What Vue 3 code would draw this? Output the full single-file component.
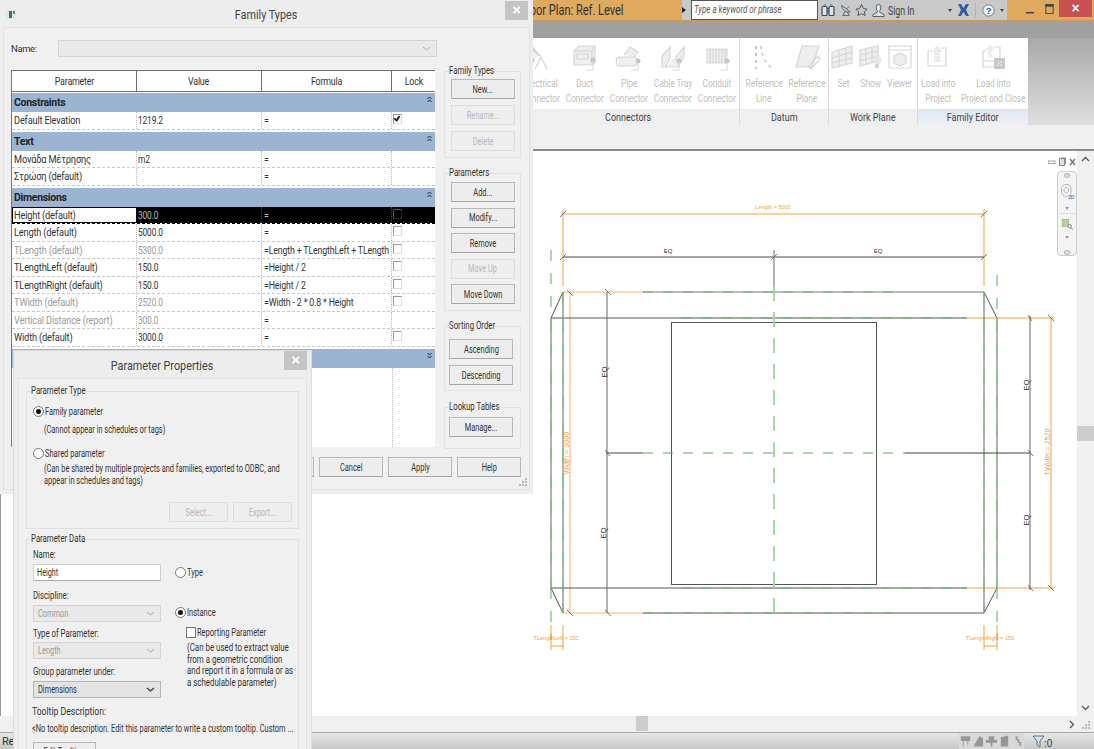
<script setup>
const panels = [
  { name: 'Connectors', cls: 'p-conn', tools: [
    { w: 44, l: ['Electrical', 'Connector'], d: 'M4 3L14 14L7 8ZM14 14L20 26M14 14L8 26M4 12V20', f: 'M1 9L6 2L13 12L8 15Z', pin: [5, 17] },
    { w: 44, l: ['Duct', 'Connector'], d: 'M3 8L8 3H24V19L21 22H3ZM3 8H21V22M21 8L24 3M6 11H17V16H6Z', f: 'M3 8L8 3H24V19L21 22H3Z', pin: [22, 17], tail: 1 },
    { w: 44, l: ['Pipe', 'Connector'], d: 'M3 14H20A3 5 0 0 1 20 23H3A3 5 0 0 1 3 14ZM9 12L15 4L23 9L19 14', f: 'M3 14H20V23H3ZM9 12L15 4L23 9L19 14Z', pin: [23, 18], tail: 1 },
    { w: 44, l: ['Cable Tray', 'Connector'], d: 'M3 24V13L11 4V14L7 24ZM7 24H19L25 13V4L17 14V17', f: 'M3 24V13L11 4V14L7 24ZM17 14L25 4V13L19 24H9L13 16H17Z', pin: [20, 18], tail: 1 },
    { w: 44, l: ['Conduit', 'Connector'], d: 'M4 6H24V20H4ZM7 6V20M10 6V20M13 6V20M16 6V20M19 6V20M22 6V20', f: 'M4 6H24V20H4Z', pin: [24, 18], tail: 1 },
  ] },
  { name: 'Datum', cls: 'p-datum', tools: [
    { w: 44, l: ['Reference', 'Line'], d: '', f: '', dots: 'M6 3V26', dots2: 'M11 3C12 14 16 22 24 26' },
    { w: 42, l: ['Reference', 'Plane'], d: 'M9 3H26L19 24H3ZM18 26L27 16L25 13L16 23Z', f: 'M9 3H26L19 24H3Z' },
  ] },
  { name: 'Work Plane', cls: 'p-wp', tools: [
    { w: 28, l: ['Set'], d: 'M3 9L23 3V20L3 25ZM3 15L23 9M3 20L23 15M10 7V24M17 5V22', f: 'M3 9L23 3V20L3 25Z' },
    { w: 28, l: ['Show'], d: 'M3 7L21 3V18L3 23ZM3 12L21 8M3 18L21 13M9 5V21M15 4V20', f: 'M3 7L21 3V18L3 23Z', bulb: 1 },
    { w: 29, l: ['Viewer'], d: 'M3 3H25V25H3ZM3 7H25M8 13L14 10L20 13V20L14 23L8 20Z', f: 'M8 13L14 10L20 13V20L14 23L8 20Z' },
  ] },
  { name: 'Family Editor', cls: 'p-fam', tools: [
    { w: 40, l: ['Load into', 'Project'], d: 'M8 8H4V23H22V5H17M9 18H17', f: 'M13 2L19 9H16V17H10V9H7Z' },
    { w: 70, l: ['Load into', 'Project and Close'], d: 'M7 8H4V24H16M4 18H15M15 4H21V15', f: 'M11 1L16 7H13V14H9V7H6Z', closeBox: 1 },
  ] },
]

const params = [
  { g: 'Constraints' },
  { n: 'Default Elevation', v: '1219.2', f: '=', check: 'on' },
  { g: 'Text' },
  { n: 'Μονάδα Μέτρησης', v: 'm2', f: '=' },
  { n: 'Στρώση (default)', v: '', f: '=' },
  { g: 'Dimensions' },
  { n: 'Height (default)', v: '300.0', f: '=', check: 'off', sel: true },
  { n: 'Length (default)', v: '5000.0', f: '=', check: 'off' },
  { n: 'TLength (default)', v: '5300.0', f: '=Length + TLengthLeft + TLength', check: 'off', dim: true },
  { n: 'TLengthLeft (default)', v: '150.0', f: '=Height / 2', check: 'off' },
  { n: 'TLengthRight (default)', v: '150.0', f: '=Height / 2', check: 'off' },
  { n: 'TWidth (default)', v: '2520.0', f: '=Width - 2 * 0.8 * Height', check: 'off', dim: true },
  { n: 'Vertical Distance (report)', v: '300.0', f: '=', dim: true },
  { n: 'Width (default)', v: '3000.0', f: '=', check: 'off' },
]

const sideGroups = [
  { title: 'Family Types', cls: 'sg-types', lw: 44, btns: [['New...'], ['Rename...', 1], ['Delete', 1]] },
  { title: 'Parameters', cls: 'sg-params', lw: 38, btns: [['Add...'], ['Modify...'], ['Remove'], ['Move Up', 1], ['Move Down']] },
  { title: 'Sorting Order', cls: 'sg-sort', lw: 45, btns: [['Ascending'], ['Descending']] },
  { title: 'Lookup Tables', cls: 'sg-lookup', lw: 47, btns: [['Manage...']] },
]

const ticks = [
  [560, 217, 566, 211], [981, 217, 987, 211], [560, 260, 566, 254], [981, 260, 987, 254], [771, 260, 777, 254],
  [567, 290, 573, 296], [605, 289, 611, 295], [1028, 315, 1032, 321], [1048, 315, 1054, 321],
  [605, 450, 610, 456], [1028, 450, 1033, 456], [567, 610, 573, 616], [605, 610, 611, 616],
  [1028, 585, 1033, 591], [1048, 585, 1054, 591],
]
const darkV = [
  [551, 318, 588], [563, 292, 613], [984, 292, 613], [997, 318, 588],
  [607, 292, 613], [1030, 316, 590],
]
</script>

<template>
  <div class="app">
    <header class="topbar">
      <div class="doc-title"><span>Floor Plan: Ref. Level</span></div>
      <div class="infocenter">
        <span class="caret-right"></span>
        <div class="search"><span>Type a keyword or phrase</span></div>
        <div class="info-icons">
          <svg width="14" height="14" viewBox="0 0 14 14" class="ic"><path d="M2.500 1H5V3.500H2.500ZM9 1H11.500V3.500H9Z" fill="#8c97a6"/><rect x="1" y="3.500" width="5" height="9" rx="1" fill="#dfe3e8" stroke="#3a4658" stroke-width="1.200"/><rect x="8" y="3.500" width="5" height="9" rx="1" fill="#dfe3e8" stroke="#3a4658" stroke-width="1.200"/><path d="M6 5.500H8M6 8H8" stroke="#3a4658" stroke-width="1.200"/></svg>
          <svg width="12" height="15" viewBox="0 0 13 15" class="ic ic-sat"><path d="M2 2C2 7 6 10 11 9ZM6 8L3 13H10L8 9M7 6L10 3" fill="none" stroke="#55606e"/></svg>
          <svg width="13" height="14" viewBox="0 0 14 14" class="ic ic-star"><path d="M7 1L9 5.5L13 6L10 9L11 13L7 11L3 13L4 9L1 6L5 5.5Z" fill="none" stroke="#45505e"/></svg>
          <svg width="13" height="15" viewBox="0 0 14 15" class="ic ic-user"><path d="M4.5 4A2.5 3 0 0 1 9.500 4C9.500 7 8 8 8 9L13 12V14H1V12L6 9C6 8 4.500 7 4.500 4Z" fill="#dde3ea" stroke="#4d5866"/></svg>
          <span class="signin"><span>Sign In</span></span>
          <span class="caret-down c1"></span>
          <svg width="13" height="14" viewBox="0 0 13 14" class="ic ic-x"><path d="M1 1H4L6.500 5L9 1H12L9 7L12 13H9L6.500 9L4 13H1L4 7Z" fill="#2f5f9d"/></svg>
          <span class="sep"></span>
          <svg width="13" height="15" viewBox="0 0 15 15" class="ic ic-help"><circle cx="7.500" cy="7.500" r="6.500" fill="#f2f5f9" stroke="#5a6f8c"/><text x="7.500" y="11" text-anchor="middle" class="qm">?</text></svg>
          <span class="caret-down c2"></span>
        </div>
      </div>
      <div class="winctl">
        <svg width="8" height="3" viewBox="0 0 8 3" class="w-min"><rect width="8" height="1.500" fill="#444"/></svg>
        <svg width="9" height="10" viewBox="0 0 9 11" class="w-max"><rect x=".5" y=".5" width="8" height="10" fill="none" stroke="#444"/><rect width="9" height="3" fill="#444"/></svg>
        <div class="w-close">×</div>
      </div>
    </header>
    <div class="band"></div>

    <section class="ribbon">
      <div v-for="p in panels" :key="p.name" class="panel" :class="p.cls">
        <div class="tools">
          <div v-for="t in p.tools" :key="t.l.join()" class="tool" :style="{ width: t.w + 'px' }">
            <svg width="28" height="28" viewBox="0 0 28 28" class="tool-ic">
              <path v-if="t.f" :d="t.f" fill="#eeeeee" stroke="none"/>
              <path v-if="t.d" :d="t.d" fill="none" stroke="#d6d6d6" stroke-width="1.200"/>
              <path v-if="t.dots" :d="t.dots" fill="none" stroke="#c4c4c4" stroke-width="2" stroke-dasharray="3 4"/>
              <path v-if="t.dots2" :d="t.dots2" fill="none" stroke="#c4c4c4" stroke-width="1.500" stroke-dasharray="3 4"/>
              <g v-if="t.pin"><circle :cx="t.pin[0]" :cy="t.pin[1]" r="2.500" fill="#c4c4c4"/></g>
              <path v-if="t.tail" :d="`M${t.pin[0]} ${t.pin[1]}V27H${t.pin[0] - 7}`" fill="none" stroke="#d6d6d6"/>
              <g v-if="t.bulb"><circle cx="20" cy="17" r="4.500" fill="#e6e6e6"/><rect x="18" y="21" width="4" height="4" fill="#d6d6d6"/></g>
              <g v-if="t.closeBox"><rect x="15" y="15" width="11" height="11" fill="#c8c8c8"/><path d="M18 18L23 23M23 18L18 23" stroke="#eee"/></g>
            </svg>
            <div v-for="line in t.l" :key="line" class="tool-line">{{ line }}</div>
          </div>
        </div>
        <div class="panel-name"><span>{{ p.name }}</span></div>
      </div>
      <div class="ribbon-rest"></div>
    </section>
    <div class="tabstrip"></div>

    <main class="workspace">
      <div class="canvas">
        <svg class="drawing" width="1077" height="565" viewBox="0 151 1077 565">
          <g fill="none">
            <path d="M563 209V286M984 209V286M563 214H984" stroke="#f5a03c"/>
            <path d="M563 257H984" stroke="#4a4a4a"/>
            <path d="M774 250V286" stroke="#999" stroke-width="1.500"/>
            <path d="M570 293V613" stroke="#fcc898" stroke-width="1.500"/>
            <path d="M1051 318V588" stroke="#f5a03c"/>
            <path d="M563 292L551 318M984 292L997 318M551 588L563 613M997 588L984 613" stroke="#555"/>
            <path d="M643 292H984" stroke="#777"/>
            <path d="M551 318H967M551 588H967M643 613H984" stroke="#555"/>
            <path d="M967 318H1054M967 588H1055" stroke="#f5a03c"/>
            <path d="M563 292H643M563 613H643" stroke="#fcb26e"/>
            <path v-for="v in darkV" :key="v[0]" :d="`M${v[0]} ${v[1]}V${v[2]}`" stroke="#666"/>
            <rect x="671.500" y="322.500" width="205" height="262" stroke="#555"/>
            <path d="M643 292H902M682 318H967M682 588H967M643 613H902" stroke="#62b862" stroke-dasharray="10 10"/>
            <path d="M551 250V318M551 588V640M997 275V318M997 588V640" stroke="#55b055" stroke-dasharray="11 12"/>
            <path d="M551 318V588M563 292V613M984 292V613M997 318V588" stroke="#6cc46c" stroke-dasharray="14 12"/>
            <path d="M774 286V612" stroke="#a5d8a5" stroke-width="2" stroke-dasharray="15 11"/>
            <path d="M606 453H643M905 453H1031" stroke="#444"/>
            <path d="M643 453H905" stroke="#55a855" stroke-dasharray="10 10"/>
            <path d="M551 625V650M563 625V650M551 646H563M984 625V650M997 625V650M984 646H997" stroke="#f5a03c"/>
            <path v-for="(t, i) in ticks" :key="i" :d="`M${t[0]} ${t[1]}L${t[2]} ${t[3]}`" stroke="#555" stroke-width=".8"/>
          </g>
          <g class="dim orange">
            <text x="773" y="209" text-anchor="middle">Length = 5000</text>
            <text x="556" y="640" text-anchor="middle">TLengthLeft = 150</text>
            <text x="990" y="640" text-anchor="middle">TLengthRight = 150</text>
            <text class="rot" transform="translate(568.500 453) rotate(-90)" text-anchor="middle">Width = 3000</text>
            <text class="rot" transform="translate(1049.500 452) rotate(-90)" text-anchor="middle">TWidth = 2520</text>
          </g>
          <g class="dim">
            <text class="eq" x="668" y="253" text-anchor="middle">EQ</text>
            <text class="eq" x="878" y="253" text-anchor="middle">EQ</text>
            <text class="eqv" transform="translate(606.500 372) rotate(-90)" text-anchor="middle">EQ</text>
            <text class="eqv" transform="translate(606 533) rotate(-90)" text-anchor="middle">EQ</text>
            <text class="eqv" transform="translate(1029 385) rotate(-90)" text-anchor="middle">EQ</text>
            <text class="eqv" transform="translate(1029 520) rotate(-90)" text-anchor="middle">EQ</text>
          </g>
        </svg>
        <div class="view-ctl">
          <svg width="8" height="4" viewBox="0 0 8 4"><rect y="1" width="7" height="2.500" fill="#fff" stroke="#777" stroke-width=".7"/></svg>
          <svg width="7" height="9" viewBox="0 0 7 9"><rect x=".5" y="1.500" width="5" height="7" fill="#ddd" stroke="#777" stroke-width=".8"/><path d="M2 1H6.500V7" fill="none" stroke="#777" stroke-width=".8"/></svg>
          <svg width="7" height="8" viewBox="0 0 7 8"><path d="M1 1L6 7M6 1L1 7" stroke="#777" stroke-width="1.500"/></svg>
        </div>
        <div class="navbar">
          <span class="nav-dot"></span>
          <svg width="16" height="19" viewBox="0 0 16 19" class="nav-wheel"><rect x=".5" y=".5" width="11" height="14" rx="5" fill="#fafafa" stroke="#aaa"/><circle cx="6" cy="7" r="3" fill="none" stroke="#aaa"/><text x="15.500" y="17" text-anchor="end" class="d2">2D</text></svg>
          <span class="nav-caret"></span>
          <span class="nav-sep"></span>
          <svg width="13" height="13" viewBox="0 0 13 13" class="nav-zoom"><rect x=".5" y=".5" width="7" height="8" fill="#b7d39a" stroke="#9ab38a"/><circle cx="9" cy="8.500" r="2" fill="#fff" stroke="#666"/><path d="M10.500 10L12.500 12.500" stroke="#666"/></svg>
          <span class="nav-caret second"></span>
          <span class="nav-dot bottom"></span>
        </div>
      </div>
      <aside class="vscroll">
        <svg width="9" height="6" viewBox="0 0 9 6" class="chev"><path d="M1 5L4.500 1.500L8 5" fill="none" stroke="#555" stroke-width="1.300"/></svg>
        <div class="v-thumb"></div>
        <svg width="9" height="6" viewBox="0 0 9 6" class="chev chev-dn"><path d="M1 1L4.500 4.500L8 1" fill="none" stroke="#555" stroke-width="1.300"/></svg>
      </aside>
    </main>

    <div class="hscroll">
      <div class="h-thumb"></div>
      <svg width="6" height="9" viewBox="0 0 6 9" class="chev-r"><path d="M1 1L4.500 4.500L1 8" fill="none" stroke="#555" stroke-width="1.300"/></svg>
      <svg width="8" height="8" viewBox="0 0 8 8" class="grip"><path d="M6 0h2v2H6zM3 3h2v2H3zM6 3h2v2H6zM0 6h2v2H0zM3 6h2v2H3zM6 6h2v2H6z" fill="#bbb"/></svg>
    </div>
    <footer class="status">
      <span class="ready">Ready</span>
      <div class="status-icons">
        <svg v-for="d in ['M2 2H7V7H5V13H4V7H2ZM7 2H12V7H10V11H9V7H7Z', 'M2 12L8 2L12 4V13H2Z', 'M4 2H10V6H13V9H8V13H6V9H1V6H4Z', 'M3 3L11 1V13H3Z', 'M5 2H7V5H9V8H11V12H9V9H7V6H5Z']" :key="d" width="13" height="16" viewBox="0 0 14 14" class="st-ic"><path :d="d" fill="#969696"/></svg>
        <svg width="13" height="14" viewBox="0 0 13 14" class="st-filter"><path d="M1 2H12L8 7V13L5 11V7Z" fill="#d9e6ee" stroke="#5d7182"/></svg>
        <span class="filter-n">:0</span>
      </div>
    </footer>

    <!-- Family Types dialog -->
    <div class="dialog family">
      <div class="d-head">
        <svg width="10" height="9" viewBox="0 0 10 9" class="d-icon"><rect width="10" height="9" fill="#dfe6ea"/><rect x="3" y="1" width="3" height="7" fill="#2d7a5f"/><rect x="7" y="1" width="2" height="3" fill="#6a7c88"/></svg>
        <div class="d-title">Family Types</div>
        <div class="d-close">×</div>
      </div>
      <div class="d-body">
        <div class="name-row">
          <label class="lbl name-lbl">Name:</label>
          <div class="select disabled name-sel">
            <svg width="9" height="5" viewBox="0 0 9 5"><path d="M1 1L4.500 4L8 1" fill="none" stroke="#aaa"/></svg>
          </div>
        </div>
        <div class="main-row">
          <div class="ptable">
            <div class="thead">
              <div class="th"><span>Parameter</span></div>
              <div class="th"><span>Value</span></div>
              <div class="th"><span>Formula</span></div>
              <div class="th"><span>Lock</span></div>
            </div>
            <template v-for="r in params" :key="r.g || r.n">
              <div v-if="r.g" class="group-row">
                <span>{{ r.g }}</span>
                <svg width="5" height="7" viewBox="0 0 5 7" class="fold"><path d="M.5 3L2.500 1L4.500 3M.5 6L2.500 4L4.500 6" fill="none" stroke="#222"/></svg>
              </div>
              <div v-else class="row" :class="{ sel: r.sel, dim: r.dim }">
                <div class="td"><span>{{ r.n }}</span></div>
                <div class="td val"><span>{{ r.v }}</span></div>
                <div class="td frm"><span>{{ r.f }}</span></div>
                <div class="td lock">
                  <span v-if="r.check" class="chk" :class="{ on: r.check === 'on' }"></span>
                </div>
              </div>
            </template>
            <div class="group-row last">
              <span></span>
              <svg width="5" height="7" viewBox="0 0 5 7" class="fold"><path d="M.5 1L2.500 3L4.500 1M.5 4L2.500 6L4.500 4" fill="none" stroke="#222"/></svg>
            </div>
            <div class="t-rest"><i></i></div>
          </div>
          <div class="side">
            <fieldset v-for="g in sideGroups" :key="g.title" class="sg" :class="g.cls">
              <legend :style="{ width: g.lw + 'px' }"><span>{{ g.title }}</span></legend>
              <button v-for="b in g.btns" :key="b[0]" class="btn" :class="{ off: b[1] }"><span>{{ b[0] }}</span></button>
            </fieldset>
          </div>
        </div>
        <div class="d-foot">
          <button class="btn" aria-label="OK"></button>
          <button class="btn"><span>Cancel</span></button>
          <button class="btn"><span>Apply</span></button>
          <button class="btn"><span>Help</span></button>
        </div>
        <svg width="8" height="8" viewBox="0 0 8 8" class="d-grip"><path d="M6 0h2v2H6zM3 3h2v2H3zM6 3h2v2H6zM0 6h2v2H0zM3 6h2v2H3zM6 6h2v2H6z" fill="#bbb"/></svg>
      </div>
    </div>

    <!-- Parameter Properties dialog -->
    <div class="dialog props">
      <div class="d-head">
        <div class="d-title">Parameter Properties</div>
        <div class="d-close">×</div>
      </div>
      <div class="d-body">
        <fieldset class="pg pg-type">
          <legend class="lg-type"><span>Parameter Type</span></legend>
          <div class="opt"><span class="radio on"></span><span class="opt-t">Family parameter</span></div>
          <div class="note first">(Cannot appear in schedules or tags)</div>
          <div class="opt shared"><span class="radio"></span><span class="opt-t">Shared parameter</span></div>
          <div class="note second">(Can be shared by multiple projects and families, exported to ODBC, and<br>appear in schedules and tags)</div>
          <div class="pg-btns">
            <button class="btn off"><span>Select...</span></button>
            <button class="btn off"><span>Export...</span></button>
          </div>
        </fieldset>
        <fieldset class="pg pg-data">
          <legend class="lg-data"><span>Parameter Data</span></legend>
          <div class="data-cols">
            <div class="data-left">
              <div class="lbl l-name">Name:</div>
              <div class="input"><span>Height</span></div>
              <div class="lbl l-disc">Discipline:</div>
              <div class="select disabled"><span>Common</span><svg width="9" height="5" viewBox="0 0 9 5"><path d="M1 1L4.500 4L8 1" fill="none" stroke="#aaa"/></svg></div>
              <div class="lbl l-top">Type of Parameter:</div>
              <div class="select disabled s-top"><span>Length</span><svg width="9" height="5" viewBox="0 0 9 5"><path d="M1 1L4.500 4L8 1" fill="none" stroke="#aaa"/></svg></div>
              <div class="lbl l-grp">Group parameter under:</div>
              <div class="select active"><span>Dimensions</span><svg width="9" height="5" viewBox="0 0 9 5"><path d="M1 1L4.500 4L8 1" fill="none" stroke="#333" stroke-width="1.200"/></svg></div>
            </div>
            <div class="data-right">
              <div class="opt o-type"><span class="radio"></span><span class="opt-t">Type</span></div>
              <div class="opt o-inst"><span class="radio on"></span><span class="opt-t">Instance</span></div>
              <div class="rep"><span class="box"></span><span class="opt-t">Reporting Parameter</span></div>
              <div class="rep-note">(Can be used to extract value<br>from a geometric condition<br>and report it in a formula or as<br>a schedulable parameter)</div>
            </div>
          </div>
          <div class="lbl l-tip">Tooltip Description:</div>
          <div class="tip">&lt;No tooltip description. Edit this parameter to write a custom tooltip. Custom ...</div>
          <button class="btn edit"><span>Edit Tooltip...</span></button>
        </fieldset>
      </div>
    </div>
  </div>
</template>

<style>
html, body { margin: 0; padding: 0; overflow: hidden; background: #fff; }
</style>

<style scoped>
.app {
  position: relative; width: 1094px; height: 749px; overflow: hidden;
  display: flex; flex-direction: column;
  font-family: Roboto, "Noto Sans", sans-serif; font-size: 10.5px; letter-spacing: -.2px; color: #333;
}
/* narrow text, as in the reference */
.doc-title span, .search span, .signin span, .panel-name span, .th span, .td span:not(.chk),
.btn span, legend span, .opt-t, .input span, .select span {
  display: inline-block; white-space: nowrap; transform-origin: left center;
}
/* top */
.topbar { height: 21px; flex: none; background: #dfa95f; display: flex; box-sizing: border-box; border-bottom: 1px solid #c99a58; }
.doc-title { margin-left: 521px; width: 161px; font-size: 14.500px; line-height: 21px; letter-spacing: 0; color: #333; white-space: nowrap; overflow: hidden; }
.doc-title span { transform: scaleX(.76); }
.infocenter { width: 325px; background: #c9c9c9; display: flex; align-items: center; position: relative; flex: none; }
.caret-right { width: 0; height: 0; border-left: 4px solid #222; border-top: 3px solid transparent; border-bottom: 3px solid transparent; margin: 0 5px 0 0; flex: none; }
.search { width: 127px; height: 20px; flex: none; box-sizing: border-box; background: #fff; border: 1px solid #555; font-style: italic; font-size: 10.5px; line-height: 18px; color: #555; padding-left: 2px; letter-spacing: 0; overflow: hidden; }
.search span { transform: scaleX(.76); }
.info-icons { display: flex; align-items: center; height: 20px; color: #444; }
.ic { margin-left: 3px; flex: none; }
.ic-sat { margin-left: 5px; } .ic-star { margin-left: 3px; } .ic-user { margin-left: 4px; }
.signin { font-size: 12.500px; margin-left: 3px; color: #444; letter-spacing: 0; width: 60px; flex: none; }
.signin span { transform: scaleX(.7); }
.caret-down { width: 0; height: 0; flex: none; border-top: 3px solid #444; border-left: 2.500px solid transparent; border-right: 2.500px solid transparent; }
.ic-x { margin-left: 5px; }
.sep { width: 1px; height: 15px; background: #b5b5b5; margin: 0 6px 0 5px; flex: none; }
.ic-help { margin-left: 0; }
.qm { font: bold 11px "Liberation Sans", sans-serif; fill: #2a59a0; }
.c2 { margin-left: 5px; }
.winctl { flex: 1; display: flex; align-items: flex-start; position: relative; }
.w-min { margin: 12px 0 0 19px; flex: none; }
.w-max { margin: 4px 0 0 11px; flex: none; }
.w-close { width: 33px; height: 17px; background: #c75050; color: #fff; font: bold 14px/16px "Liberation Sans", sans-serif; text-align: center; margin-left: 5px; flex: none; }
.band { height: 17px; flex: none; background: #a0a0a0; }
/* ribbon */
.ribbon { height: 87px; flex: none; display: flex; background: #fff; }
.panel { display: flex; flex-direction: column; border-right: 1px solid #d8d8d8; box-sizing: border-box; height: 87px; flex: none; }
.p-conn { width: 740px; }
.p-datum { width: 89px; }
.p-wp { width: 89px; }
.p-fam { width: 110px; border-right: 0; }
.tools { flex: 1; display: flex; justify-content: flex-end; padding-top: 5px; }
.p-wp .tools { justify-content: flex-start; }
.p-fam .tools { justify-content: flex-start; }
.tool { display: flex; flex-direction: column; align-items: center; color: #c0c0c0; font-size: 10.5px; letter-spacing: -.1px; flex: none; }
.tool-ic { margin-bottom: 5px; flex: none; }
.tool-line { line-height: 15px; white-space: nowrap; transform: scaleX(.8); }
.panel-name { height: 16px; line-height: 17px; text-align: center; background: #efefef; color: #444; font-size: 11px; letter-spacing: 0; }
.panel-name span { transform: scaleX(.82); transform-origin: center; }
.p-conn .panel-name { padding-left: 517px; }
.p-fam .panel-name { background: linear-gradient(#dfe6f2, #eef0f6); }
.ribbon-rest { flex: 1; background: linear-gradient(#a9a9a9, #dedede); }
.tabstrip { height: 26px; flex: none; background: #f0f0f0; border-bottom: 2px solid #8a8a8a; box-sizing: border-box; }
/* workspace */
.workspace { height: 565px; flex: none; display: flex; }
.canvas { position: relative; width: 1077px; background: #fff; border-left: 1px solid #999; box-sizing: border-box; overflow: hidden; }
.drawing { display: block; margin-left: -1px; }
.dim text { font: 5.500px "Liberation Sans", sans-serif; fill: #333; letter-spacing: 0; }
.dim text.rot { font-size: 7.200px; }
.dim text.eq { font-size: 6px; }
.dim text.eqv { font-size: 8px; }
.dim.orange text { fill: #f5a03c; }
.view-ctl { position: absolute; left: 1047px; top: 6px; display: flex; gap: 3px; align-items: center; }
.navbar { position: absolute; left: 1056px; top: 20px; width: 20px; height: 85px; box-sizing: border-box; background: #f4f4f4; border: 1px solid #ccc; border-radius: 4px; display: flex; flex-direction: column; align-items: center; }
.nav-dot { width: 4px; height: 4px; border-radius: 50%; background: #ddd; border: 1px solid #bbb; margin-top: 1px; }
.nav-dot.bottom { margin-top: 11px; }
.nav-wheel { margin-top: 6px; margin-left: 2px; }
.nav-caret { width: 0; height: 0; border-top: 3px solid #999; border-left: 2px solid transparent; border-right: 2px solid transparent; margin-top: 6px; }
.nav-caret.second { margin-top: 6px; }
.nav-sep { width: 16px; height: 1px; background: #ddd; margin-top: 3px; }
.nav-zoom { margin-top: 5px; }
.d2 { font: bold 6px "Liberation Sans", sans-serif; fill: #5b8bd0; }
.vscroll { width: 17px; background: #f0f0f0; position: relative; }
.chev { position: absolute; left: 4px; top: 5px; }
.chev-dn { top: auto; bottom: 5px; }
.v-thumb { position: absolute; left: 0; right: 0; top: 275px; height: 15px; background: #cdcdcd; }
.hscroll { height: 16px; flex: none; background: #f0f0f0; position: relative; }
.h-thumb { position: absolute; left: 636px; top: 0; width: 12px; height: 15px; background: #cdcdcd; }
.chev-r { position: absolute; left: 1069px; top: 4px; }
.grip { position: absolute; right: 4px; top: 5px; }
.status { flex: 1; background: linear-gradient(#e6e6e6, #c8c8c8); border-top: 1px solid #a8a8a8; display: flex; justify-content: space-between; align-items: center; font-size: 11px; padding-left: 2px; }
.status-icons { display: flex; align-items: center; margin-right: 42px; }
.st-ic { background: #d8d8d8; }
.st-filter { margin-left: 8px; }
.filter-n { font: 10px "Liberation Sans", sans-serif; color: #333; margin-left: -1px; margin-top: 4px; }
/* dialogs */
.dialog { position: absolute; background: #ededed; box-sizing: border-box; display: flex; flex-direction: column; }
.family { left: 0; top: 0; width: 533px; height: 494px; }
.props { left: 14px; top: 351px; width: 297px; height: 420px; box-shadow: 0 0 0 1px #dcdcdc; }
.d-head { height: 27px; flex: none; position: relative; display: flex; justify-content: center; }
.d-icon { position: absolute; left: 6px; top: 10px; }
.d-title { font-size: 13.500px; line-height: 28px; color: #444; letter-spacing: 0; transform: scaleX(.8); white-space: nowrap; }
.d-close { position: absolute; right: 5px; top: 1px; width: 23px; height: 19px; background: #c4c4c4; color: #fff; font: bold 15px/18px "Liberation Sans", sans-serif; text-align: center; }
.props .d-close { right: 4px; top: 0; }
.d-body { flex: 1; margin: 0 3px 4px; background: #f0f0f0; border: 1px solid #e2e2e2; box-sizing: border-box; position: relative; }
.family .d-body { padding: 11px 8px 0 7px; }
.name-row { display: flex; height: 18px; align-items: center; }
.lbl { font-size: 10px; color: #333; letter-spacing: 0; white-space: nowrap; transform: scaleX(.78); transform-origin: left center; }
.name-lbl { width: 47px; flex: none; display: block; transform: none; font-size: 9.500px; letter-spacing: -.4px; }
.select { height: 17px; box-sizing: border-box; border: 1px solid #d4d4d4; background: #e9e9e9; display: flex; align-items: center; justify-content: space-between; padding: 0 5px 0 4px; font-size: 10px; letter-spacing: 0; color: #999; }
.select span { transform: scaleX(.74); }
.name-sel { width: 379px; justify-content: flex-end; }
.main-row { display: flex; gap: 9px; margin-top: 8px; height: 384px; }
.ptable { width: 424px; height: 377px; margin-top: 5px; background: #fff; display: flex; flex-direction: column; border-left: 1px solid #777; box-sizing: border-box; flex: none; }
.thead { display: grid; grid-template-columns: 125px 125px 130px 43px; height: 22px; flex: none; background: #fff; border: solid #6f6f6f; border-width: 1px 0; box-sizing: border-box; margin-bottom: 1px; }
.th { text-align: center; line-height: 21px; font-size: 10.500px; border-right: 1px solid #6f6f6f; color: #333; }
.th span { transform: scaleX(.84); transform-origin: center; }
.th:last-child { border-right: 0; }
.group-row { height: 19px; flex: none; background: #9ab4d2; margin-top: 2px; display: flex; justify-content: space-between; padding: 0 3px 0 2px; font-weight: 700; font-size: 10.500px; line-height: 20px; color: #222; letter-spacing: -.3px; }
.thead + .group-row { margin-top: 0; }
.fold { margin-top: 3px; }
.row { display: grid; grid-template-columns: 125px 125px 130px 43px; height: 17.500px; flex: none; border-bottom: 1px dashed #c8c8c8; box-sizing: border-box; }
.td { padding-left: 2px; line-height: 17px; font-size: 10.500px; border-right: 1px dotted #b8b8b8; white-space: nowrap; overflow: hidden; color: #333; }
.td span:not(.chk) { transform: scaleX(.88); }
.td.val { padding-left: 1px; }
.td.val span { transform: scaleX(.8); }
.td.frm span { transform: scaleX(.84); }
.td:last-child { border-right: 0; }
.frm { color: #333; }
.row.dim .td { color: #9a9a9a; }
.row.dim .frm { color: #333; }
.row.sel { border-bottom-color: #000; }
.row.sel .td { background: #000; color: #bbb; border-right-color: #444; }
.row.sel .td:first-child { background: #fff; color: #333; outline: 1px solid #000; outline-offset: -1px; }
.lock { padding-left: 1px; }
.chk { display: inline-block; width: 7px; height: 8px; border: 1px solid #999; border-right-color: #ddd; border-bottom-color: #ddd; background: #fff; margin-top: 2px; vertical-align: top; position: relative; }
.row.sel .chk { background: #000; border-color: #555 #222 #222 #555; }
.chk.on::after { content: ""; position: absolute; left: 1px; top: 0; width: 2px; height: 4px; border: solid #222; border-width: 0 2px 2px 0; transform: rotate(35deg); }
.t-rest { flex: 1; position: relative; }
.t-rest i { position: absolute; left: 380px; top: 0; bottom: 0; border-left: 1px dotted #b8b8b8; }
.side { width: 77px; flex: none; display: flex; flex-direction: column; }
.sg { margin: 0; border: 1px solid #e2e2e2; padding: 2px 5px 6px 6px; box-sizing: border-box; display: flex; flex-direction: column; min-width: 0; }
.sg legend { font-size: 10px; padding: 0; margin-left: -2px; line-height: 12px; color: #333; letter-spacing: 0; white-space: nowrap; }
legend span { transform: scaleX(.78); }
.sg-types { height: 93px; gap: 6px; }
.sg-params { height: 144px; margin-top: 9px; gap: 5.500px; padding-top: 3px; }
.sg-sort { height: 71px; margin-top: 9px; gap: 6px; padding-top: 7px; padding-left: 4px; }
.sg-lookup { height: 48px; margin-top: 10px; padding-top: 4px; padding-left: 4px; }
.sg-sort legend, .sg-lookup legend { margin-left: 0; }
.btn { width: 64px; height: 20px; flex: none; padding: 0; box-sizing: border-box; background: #ededed; border: 1px solid #b9b9b9; border-bottom-color: #a5a5a5; font: inherit; font-size: 10px; color: #333; letter-spacing: 0; }
.btn span { transform: scaleX(.74); transform-origin: center; }
.btn.off { color: #b8b8b8; border-color: #dcdcdc; background: #eeeeee; }
.d-foot { display: flex; justify-content: flex-end; gap: 5px; margin-top: 8px; }
.d-grip { position: absolute; right: 2px; bottom: 3px; }
/* props */
.props .d-body { padding: 6px 7px 0; margin: 0 4px; }
.pg { margin: 0; border: 1px solid #dfdfdf; padding: 0 6px; box-sizing: border-box; min-width: 0; font-size: 10px; letter-spacing: 0; }
.pg legend { padding: 0; line-height: 12px; font-size: 10px; margin-left: -2px; letter-spacing: 0; color: #333; white-space: nowrap; }
.lg-type { width: 52px; }
.lg-data { width: 53px; }
.pg-type { height: 144px; }
.opt { display: flex; align-items: center; gap: 1px; height: 14px; font-size: 10px; }
.opt-t { transform: scaleX(.75); }
.pg-type .opt:first-of-type { margin-top: 7px; }
.radio { width: 11px; height: 11px; border: 1px solid #777; border-radius: 50%; box-sizing: border-box; background: #fff; position: relative; flex: none; }
.radio.on::after { content: ""; position: absolute; left: 2px; top: 2px; width: 5px; height: 5px; border-radius: 50%; background: #111; }
.note { margin-left: 11px; font-size: 10px; line-height: 11.500px; white-space: nowrap; width: fit-content; transform: scaleX(.74); transform-origin: left center; }
.note.first { margin-top: 5px; line-height: 14px; }
.opt.shared { margin-top: 9px; }
.note.second { margin-top: 3px; }
.pg-btns { display: flex; justify-content: flex-end; gap: 5px; margin-top: 16px; }
.pg-btns .btn { width: 59px; }
.pg-data { margin-top: 4px; height: 240px; }
.data-cols { display: flex; gap: 14px; }
.data-left { width: 128px; flex: none; }
.input { height: 17px; box-sizing: border-box; background: #fff; border: 1px solid #cfcfcf; border-bottom-color: #aaa; padding-left: 3px; line-height: 15px; font-size: 10px; margin-top: 3px; }
.input span { transform: scaleX(.72); }
.l-name { margin-top: 4px; line-height: 12px; }
.l-disc { margin-top: 9px; line-height: 12px; }
.data-left .select { margin-top: 3px; }
.l-top { margin-top: 6px; line-height: 12px; }
.data-left .s-top { margin-top: 2px; }
.l-grp { margin-top: 7px; line-height: 12px; }
.select.active { background: #e3e3e3; border-color: #b5b5b5; color: #333; }
.o-type { margin-top: 20px; }
.o-inst { margin-top: 26px; }
.rep { display: flex; align-items: center; margin: 7px 0 0 11px; gap: 1px; height: 13px; font-size: 10px; white-space: nowrap; }
.box { width: 10px; height: 11px; background: #fff; border: 1px solid #777; box-sizing: border-box; flex: none; }
.rep-note { margin: 3px 0 0 12px; line-height: 11.700px; font-size: 10px; white-space: nowrap; width: fit-content; transform: scaleX(.79); transform-origin: left center; }
.l-tip { margin-top: 8px; line-height: 12px; margin-left: -1px; width: fit-content; transform: scaleX(.86); }
.tip { margin: 5px 0 0 -1px; line-height: 12px; white-space: nowrap; font-size: 10px; width: fit-content; transform: scaleX(.745); transform-origin: left center; }
.btn.edit { display: block; margin-top: 7px; width: 63px; height: 18px; background: #ededed; }
</style>
